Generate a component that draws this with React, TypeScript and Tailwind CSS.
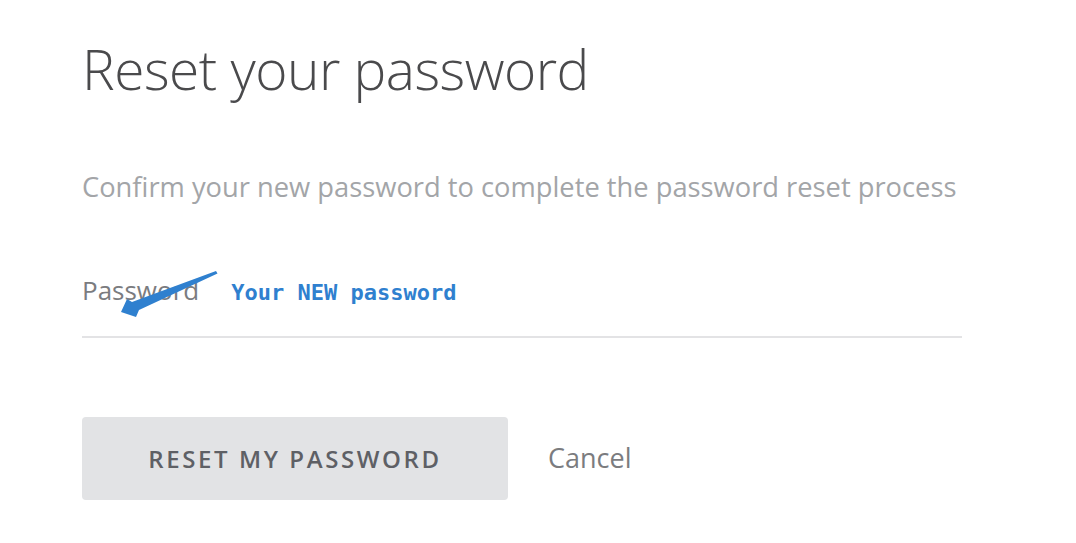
export default function App() {
  return (
    <div className="min-h-screen w-full bg-white font-['Open_Sans',sans-serif]">
      <div className="pl-[82px] pt-[33px] w-[962px]">
        <h1 className="text-[55px] font-light leading-[72px] text-[#4a4a4c] tracking-[-0.5px]">
          Reset your password
        </h1>

        <p className="mt-[65px] text-[27.3px] leading-[34px] text-[#a3a5a8]">
          Confirm your new password to complete the password reset process
        </p>

        {/* Password field */}
        <div className="relative mt-[70px] border-b-2 border-[#e3e3e5] pb-[27px]">
          <div className="flex items-baseline gap-[32px]">
            <span className="text-[26px] leading-[32px] text-[#7b7c7f]">Password</span>
            <span className="font-['DejaVu_Sans_Mono',monospace] text-[22px] font-bold text-[#2f80cf]">
              Your NEW password
            </span>
          </div>
          <svg
            className="absolute left-[28px] top-[-7px]"
            width="110"
            height="55"
            viewBox="0 0 110 55"
            fill="#2f80cf"
          >
            <path d="M106 4 L107.5 6.5 L29 43 L26 50 L11 45 L17 32 L22 35 Z" />
          </svg>
        </div>

        <div className="mt-[79px] flex items-center gap-[40px]">
          <button className="h-[83px] w-[426px] rounded-[4px] bg-[#e2e3e5] text-[24px] font-semibold tracking-[2.6px] text-[#5e6065]">
            RESET MY PASSWORD
          </button>
          <span className="text-[27px] text-[#7b7c7f]">Cancel</span>
        </div>
      </div>
    </div>
  );
}
